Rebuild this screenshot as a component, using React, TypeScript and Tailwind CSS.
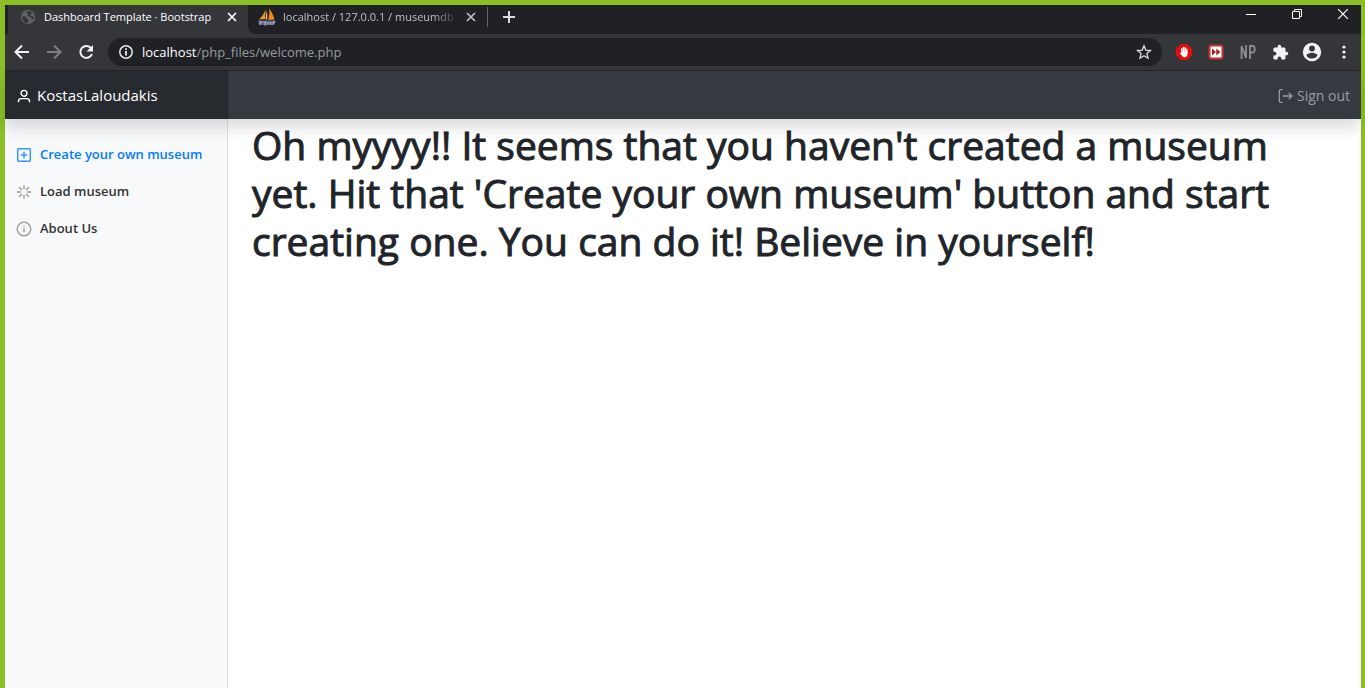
import React from 'react';

const SAILS = (
  <svg width="18" height="18" viewBox="0 0 18 18" className="shrink-0" aria-hidden="true">
    <path d="M7.500 1C6.500 5 4 8.500 1 11.500L7 11z" fill="#f59a1c" />
    <path d="M8.500 3c1 3 1 5.500.5 8.500H7.500z" fill="#f7c07a" />
    <path d="M11 0c2.500 3.500 4.500 7.500 5.500 11.500L10 12c1.500-4 1.800-8 1-12z" fill="#f08c12" />
    <path d="M0 12.500h18l-2 4.500H1z" fill="#5d5f86" />
    <path d="M2 17v-3.500h2V15H2M6 13v2h2v-2M8 15v2H6M10 17v-3l1.500 1.500L13 14v3M15 17v-3.500h1.500V15H15" stroke="#b4b4d2" fill="none" strokeWidth=".8" />
  </svg>
);

const Cross = ({ size }: { size: number }) => (
  <svg width={size} height={size} viewBox="0 0 10 10" aria-hidden="true">
    <path d="M1 1l8 8M9 1L1 9" stroke="currentColor" strokeWidth={size > 10 ? 1 : 1.7} />
  </svg>
);

function TabStrip() {
  return (
    <div className="flex h-[29px] bg-[#202124] pl-[3px] text-[11px] leading-4 font-['Open_Sans',sans-serif]">
      <div className="flex w-60 items-center bg-[#35363a] pr-2.5 pl-3 pb-[5px] text-white">
        <svg width="16" height="16" viewBox="0 0 16 16" aria-hidden="true">
          <circle cx="8" cy="8" r="7.200" fill="#5f6368" />
          <path d="M2.200 7.500C4 7 6 7.500 6.500 9S8.500 10 8.500 11.500 7.500 13 7.500 14.200C4.500 14 2.300 11.500 2.200 7.500zM7 2.200C9 1.800 11 2.500 12.200 4c-.5 1-1.700.5-2.200 1.500S12.500 7 14 8c0 1-.5 2-1 2.500C11.500 10 11.500 8.500 10 8S7 7 7.500 5.500 6.500 3.500 7 2.200z" fill="#35363a" />
        </svg>
        <span className="ml-2 flex-1 whitespace-nowrap">Dashboard Template · Bootstrap</span>
        <button aria-label="Close tab" className="flex w-3 justify-center"><Cross size={10} /></button>
      </div>
      <div className="flex flex-1 bg-[#35363a]">
        <div className="flex flex-1 items-center rounded-bl-lg bg-[#202124] pb-[5px] pl-2.5 text-[#bdc1c6]">
          {SAILS}
          <span className="ml-[7px] w-44 whitespace-nowrap [mask-image:linear-gradient(to_right,black_85%,transparent)]">localhost / 127.0.0.1 / museumdb</span>
          <button aria-label="Close tab" className="ml-1.5 flex w-3 justify-center"><Cross size={10} /></button>
          <span className="ml-2.5 h-5 w-px bg-[#5f6368]" />
          <button aria-label="New tab" className="ml-[15px] text-[#dadce0]">
            <svg width="12" height="12" viewBox="0 0 12 12"><path d="M6 0v12M0 6h12" stroke="currentColor" strokeWidth="2" /></svg>
          </button>
          <div className="ml-auto flex gap-2.5 pb-1.5 text-white">
            <button aria-label="Minimize" className="flex w-9 items-center justify-center">
              <svg width="10" height="10" viewBox="0 0 10 10"><path d="M0 5.500h10" stroke="currentColor" /></svg>
            </button>
            <button aria-label="Restore" className="flex w-9 items-center justify-center">
              <svg width="10" height="10" viewBox="0 0 10 10" fill="none" stroke="currentColor"><path d="M.5 2.500h7v7h-7zM2.500 2.500v-2h7v7h-2" /></svg>
            </button>
            <button aria-label="Close window" className="flex w-9 items-center justify-center"><Cross size={12} /></button>
          </div>
        </div>
      </div>
    </div>
  );
}

const toolButton = 'flex h-7 w-8 items-center justify-center';

function Toolbar() {
  return (
    <div className="flex h-[37px] items-center border-b border-[#242529] bg-[#35363a] pl-px pr-px text-[#f1f3f4]">
      <button aria-label="Back" className={toolButton}>
        <svg width="16" height="16" viewBox="0 0 16 16" fill="none" stroke="currentColor" strokeWidth="2"><path d="M15 8H2M8 1.500L1.500 8 8 14.500" /></svg>
      </button>
      <button aria-label="Forward" className={`${toolButton} text-[#7d7e81]`}>
        <svg width="16" height="16" viewBox="0 0 16 16" fill="none" stroke="currentColor" strokeWidth="2"><path d="M1 8h13M8 1.500L14.500 8 8 14.500" /></svg>
      </button>
      <button aria-label="Reload" className={toolButton}>
        <svg width="16" height="16" viewBox="0 0 16 16"><path d="M13.200 4.300A6 6 0 1 0 14 10" fill="none" stroke="currentColor" strokeWidth="2" /><path d="M15 1v6.500H8.500z" fill="currentColor" /></svg>
      </button>
      <div className="mx-1.5 flex h-7 flex-1 items-center rounded-full bg-[#202124] px-2.5">
        <svg width="16" height="16" viewBox="0 0 16 16" fill="none" stroke="#e8eaed" strokeWidth="1.500" aria-hidden="true"><circle cx="8" cy="8" r="6.200" /><path d="M8 7v4.500M8 4.300v1.700" strokeWidth="1.800" /></svg>
        <span className="ml-2 flex-1 text-[13px] leading-5 text-[#969ba1] font-['Open_Sans',sans-serif]"><span className="text-white">localhost</span>/php_files/welcome.php</span>
        <button aria-label="Bookmark this tab">
          <svg width="16" height="16" viewBox="0 0 16 16" fill="none" stroke="#dadce0" strokeWidth="1.300"><path d="M8 1.800l1.800 4.300 4.700.4-3.600 3.100 1.100 4.600L8 11.700l-4 2.500 1.100-4.600L1.500 6.500l4.700-.4z" /></svg>
        </button>
      </div>
      <button aria-label="Ad blocker" className={toolButton}>
        <svg width="16" height="16" viewBox="0 0 16 16"><path d="M4.700 0h6.600L16 4.700v6.600L11.300 16H4.700L0 11.300V4.700z" fill="#e40d0d" /><path d="M5.800 8.500V4.800M7.500 8V3.500M9.200 8V3.800M10.800 9V5.200" stroke="#fff" strokeWidth="1.400" strokeLinecap="round" /><path d="M5.100 7.500h6.400V10c0 2-1 3.200-2.800 3.200-1.500 0-2.300-.6-3-1.700L4 9.300c.2-.8.900-.6 1.300 0z" fill="#fff" /></svg>
      </button>
      <button aria-label="Fast forward" className={toolButton}>
        <svg width="16" height="16" viewBox="0 0 16 16"><rect x=".5" y=".5" width="15" height="15" rx="3" fill="#c9302c" /><rect x="2.500" y="2.500" width="11" height="11" rx="1" fill="#fff" /><path d="M4 4.500L8 8l-4 3.500zM8.300 4.500l4 3.500-4 3.500z" fill="#a31f1c" /></svg>
      </button>
      <button aria-label="NP" className={toolButton}>
        <svg width="16" height="16" viewBox="0 0 16 16" fill="none" stroke="#8b8c8f" strokeWidth="1.800"><path d="M1.500 15V2l4.500 12V1M10 15V2h2.500c3 0 3 6.500 0 6.500H10" /></svg>
      </button>
      <button aria-label="Extensions" className={toolButton}>
        <svg width="17" height="17" viewBox="0 0 24 24" fill="currentColor"><path d="M20.500 11H19V7c0-1.100-.9-2-2-2h-4V3.500a2.500 2.500 0 0 0-5 0V5H4c-1.100 0-2 .9-2 2v3.800h1.500a2.700 2.700 0 0 1 0 5.400H2V20c0 1.100.9 2 2 2h3.800v-1.500a2.700 2.700 0 0 1 5.400 0V22H17c1.100 0 2-.9 2-2v-4h1.500a2.500 2.500 0 0 0 0-5z" /></svg>
      </button>
      <button aria-label="Profile" className={toolButton}>
        <svg width="22" height="22" viewBox="0 0 24 24" fill="currentColor"><path d="M12 2a10 10 0 1 0 0 20 10 10 0 0 0 0-20zm0 3a3.200 3.200 0 1 1 0 6.400A3.200 3.200 0 0 1 12 5zm0 14.200a7.200 7.200 0 0 1-6-3.220c.03-1.990 4-3.080 6-3.080s5.970 1.090 6 3.080a7.200 7.200 0 0 1-6 3.220z" /></svg>
      </button>
      <button aria-label="Menu" className={toolButton}>
        <svg width="16" height="16" viewBox="0 0 16 16" fill="currentColor"><circle cx="8" cy="3" r="1.600" /><circle cx="8" cy="8" r="1.600" /><circle cx="8" cy="13" r="1.600" /></svg>
      </button>
    </div>
  );
}

const navLink = 'flex items-center gap-2 px-[11px] py-2';

export default function App() {
  return (
    <div className="flex min-h-screen flex-col border-t-[5px] border-r-4 border-l-[5px] border-[#8cbf26] bg-white">
      <TabStrip />
      <Toolbar />
      <div className="flex flex-1 flex-col font-['Open_Sans',sans-serif]">
        <nav className="relative flex h-12 bg-[#343a40] shadow-[0_8px_16px_rgba(0,0,0,0.15)]">
          <a href="#" className="flex w-[223px] items-center gap-[5px] border-r border-[#202428] bg-[#272b30] pl-[11px] text-[15px] text-white">
            <svg width="16" height="16" viewBox="0 0 16 16" fill="none" stroke="currentColor" strokeWidth="1.400" aria-hidden="true"><circle cx="8" cy="6.300" r="2.900" /><path d="M2.500 15.300v-1.200c0-1.600 1.100-2.500 2.700-2.500h5.600c1.600 0 2.700.9 2.700 2.500v1.200" /></svg>
            KostasLaloudakis
          </a>
          <a href="#" className="ml-auto flex items-center gap-1 pr-[11px] text-[14px] text-[#9a9da0]">
            <svg width="16" height="16" viewBox="0 0 16 16" fill="none" stroke="currentColor" strokeWidth="1.300" aria-hidden="true"><path d="M5.500 2.700H3.700c-.8 0-1.400.6-1.400 1.400v9.800c0 .8.6 1.400 1.400 1.400h1.800M6 9h9M11.700 5.700L15 9l-3.300 3.300" /></svg>
            Sign out
          </a>
        </nav>
        <div className="flex flex-1">
          <aside className="w-[223px] border-r border-[#dee0e2] bg-[#f8f9fa] pt-[17px]">
            <ul className="text-[13px] leading-[21px] font-semibold text-[#333]">
              <li>
                <a href="#" className={`${navLink} text-[#007bff]`}>
                  <svg width="16" height="16" viewBox="0 0 16 16" fill="none" stroke="#3395ff" strokeWidth="1.500"><rect x="1.700" y="1.700" width="12.600" height="12.600" rx="1" /><path d="M8 4.700v6.600M4.700 8h6.600" /></svg>
                  Create your own museum
                </a>
              </li>
              <li>
                <a href="#" className={navLink}>
                  <svg width="16" height="16" viewBox="0 0 16 16" fill="none" stroke="#999" strokeWidth="1.400"><path d="M8 1v4M8 11v4M1 8h4M11 8h4M3.200 3.200L6 6M10 10l2.800 2.800M3.200 12.800L6 10M10 6l2.800-2.800" /></svg>
                  Load museum
                </a>
              </li>
              <li>
                <a href="#" className={navLink}>
                  <svg width="16" height="16" viewBox="0 0 16 16" fill="none" stroke="#999" strokeWidth="1.300"><circle cx="8" cy="8" r="6.800" /><path d="M8 7.300v4M8 4.700v1.300" /></svg>
                  About Us
                </a>
              </li>
            </ul>
          </aside>
          <main className="min-w-0 flex-1 pr-12 pl-6">
            <h1 className="mt-0.5 text-[39px] leading-[48px] text-[#212529] [-webkit-text-stroke:1px_#212529]">
              Oh myyyy!! It seems that you haven't created a museum yet. Hit that 'Create your own museum' button and start creating one. You can do it! Believe in yourself!
            </h1>
          </main>
        </div>
      </div>
    </div>
  );
}
